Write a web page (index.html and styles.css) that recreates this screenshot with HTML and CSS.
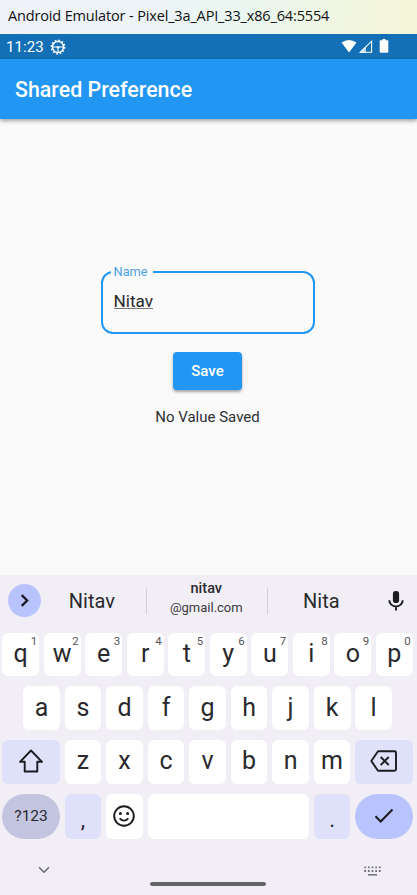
FILE: index.html
```html
<!DOCTYPE html>
<html lang="en">
<head>
<meta charset="utf-8">
<title>Shared Preference</title>
<link rel="stylesheet" href="styles.css">
</head>
<body>
<header class="window-bar"><span class="window-title">Android Emulator - Pixel_3a_API_33_x86_64:5554</span></header>
<div class="status-bar">
  <span class="clock">11:23</span>
  <svg class="gear" viewBox="0 0 16 16" width="16" height="16" fill="none" stroke="#fff"><circle cx="8" cy="8" r="5.500" stroke-width="1.400"/><circle cx="8" cy="8" r="6.700" stroke-width="1.400" stroke-dasharray="1.750 1.758"/><path d="M3 8h10M8 8v5" stroke-width="1.100"/><path d="M6 7.500h4L8 10z" fill="#fff" stroke="none"/></svg>
  <svg class="signals" viewBox="0 0 48 15" width="48" height="15"><path d="M.5 3.400Q8-1.600 15.500 3.400L8 13.600z" fill="#fff"/><path d="M30.600 2.200V13.300H19.300z" fill="none" stroke="#fff" stroke-width="1.100"/><path d="M18.500 13.800L25 7.500V13.800z" fill="#fff" opacity=".7"/><path d="M39.500 1.200h2V0h3v1.200h2q.8 0 .8.800v11q0 .8-.8.800h-7q-.8 0-.8-.8V2q0-.8.800-.8z" fill="#fff"/></svg>
</div>
<div class="app-bar"><h1>Shared Preference</h1></div>
<main class="content">
  <fieldset class="field"><legend>Name</legend><span class="value">Nitav</span></fieldset>
  <button class="save">Save</button>
  <p class="message">No Value Saved</p>
</main>
<section class="keyboard">
  <div class="suggestions">
    <span class="expand"><svg width="33" height="33" viewBox="0 0 32 32" fill="none" stroke="#1b1b20" stroke-width="2.200"><path d="M13.300 10.800L18.600 16l-5.300 5.200"/></svg></span>
    <span class="word first">Nitav</span>
    <span class="word mail"><b>nitav</b><small>@gmail.com</small></span>
    <span class="word last">Nita</span>
    <svg class="mic" width="18" height="22" viewBox="0 0 18 22"><rect x="5.900" y="1" width="6.200" height="12" rx="2.800" fill="#1b1b20"/><path d="M2.300 10.200a6.700 6.300 0 0 0 13.400 0M9 16.500V20.500" fill="none" stroke="#1b1b20" stroke-width="1.900"/></svg>
  </div>
  <div class="row">
    <span class="key">q<sup>1</sup></span><span class="key">w<sup>2</sup></span><span class="key">e<sup>3</sup></span><span class="key">r<sup>4</sup></span><span class="key">t<sup>5</sup></span><span class="key">y<sup>6</sup></span><span class="key">u<sup>7</sup></span><span class="key">i<sup>8</sup></span><span class="key">o<sup>9</sup></span><span class="key">p<sup>0</sup></span>
  </div>
  <div class="row inset">
    <span class="key">a</span><span class="key">s</span><span class="key">d</span><span class="key">f</span><span class="key">g</span><span class="key">h</span><span class="key">j</span><span class="key">k</span><span class="key">l</span>
  </div>
  <div class="row">
    <span class="key wide tint"><svg width="26" height="26" viewBox="0 0 26 26" fill="none" stroke="#1b1b20" stroke-width="1.900" stroke-linejoin="round"><path d="M13 2.500L24 13.800H19.300V23.500H6.700V13.800H2z"/></svg></span>
    <span class="key">z</span><span class="key">x</span><span class="key">c</span><span class="key">v</span><span class="key">b</span><span class="key">n</span><span class="key">m</span>
    <span class="key wide tint"><svg width="28" height="24" viewBox="0 0 28 24" fill="none" stroke="#1b1b20" stroke-width="1.900" stroke-linejoin="round"><path d="M8 2.300H24.500Q26 2.300 26 3.800V20.200Q26 21.700 24.500 21.700H8L1.300 12z"/><path d="M10.700 8l8 8M18.700 8l-8 8"/></svg></span>
  </div>
  <div class="row bottom">
    <span class="key wide symbols">?123</span>
    <span class="key tint punct">,</span>
    <span class="key emoji"><svg width="24" height="24" viewBox="0 0 24 24" fill="none" stroke="#1b1b20" stroke-width="1.900"><circle cx="12" cy="12" r="9.800"/><path d="M7.600 14.300Q12 19 16.400 14.300"/><circle cx="8.400" cy="9.500" r="1.500" fill="#1b1b20" stroke="none"/><circle cx="15.600" cy="9.500" r="1.500" fill="#1b1b20" stroke="none"/></svg></span>
    <span class="key space"></span>
    <span class="key tint punct">.</span>
    <span class="key wide enter"><svg width="20" height="16" viewBox="0 0 20 16" fill="none" stroke="#1b1b20" stroke-width="2"><path d="M1.500 8.300L6.700 13.500L18.500 1.500"/></svg></span>
  </div>
  <div class="nav">
    <svg class="hide" width="12" height="8" viewBox="0 0 12 8" fill="none" stroke="#69686d" stroke-width="1.500"><path d="M1 1.200l5 5 5-5"/></svg>
    <span class="handle"></span>
    <svg class="switch" width="17" height="10" viewBox="0 0 17 10" fill="none" stroke="#77767b"><path d="M.3 1.400H17M.3 5H17" stroke-width="1.800" stroke-dasharray="1.800 1.850"/><path d="M4 8.800h9" stroke-width="1.600"/></svg>
  </div>
</section>
</body>
</html>
```
FILE: styles.css
```css
* { box-sizing: border-box; }
body { margin: 0; width: 417px; height: 895px; overflow: hidden; display: flex; flex-direction: column; background: #fafafa; font-family: Roboto, "Liberation Sans", sans-serif; color: #1b1b20; }
svg { display: block; flex: none; }
.window-bar { height: 34px; padding-left: 8px; background: linear-gradient(100deg, #f0f2fa 0%, #edf3f9 30%, #eaf6f0 57%, #f3f6dc 90%, #f4f6d9); color: #111; }
.window-title { display: block; font: 14.5px/32px "Open Sans", sans-serif; letter-spacing: -.15px; white-space: nowrap; }
.status-bar { height: 25px; padding: 0 28px 0 6px; display: flex; align-items: center; background: #136fb6; color: #fff; }
.clock { font-size: 15px; letter-spacing: .1px; }
.gear { margin-left: 6px; }
.signals { margin-left: auto; }
.app-bar { height: 60px; flex: none; padding-left: 15px; display: flex; align-items: center; background: #2196f3; box-shadow: 0 2px 4px rgba(0,0,0,.35); }
h1 { margin: 2px 0 0; color: #fff; font-size: 21.4px; line-height: 26px; font-weight: 500; }
.content { height: 456px; flex: none; padding-top: 145px; display: flex; flex-direction: column; align-items: center; }
.field { width: 214px; height: 70px; margin: 0 0 0 -2px; padding: 0 11px; border: 2px solid #2196f3; border-radius: 12px; }
.field legend { margin-left: -3px; padding: 0 5px 0 3px; color: #4a9fe9; font-size: 12.800px; line-height: 15px; }
.value { display: block; width: max-content; height: 18px; margin-top: 12px; font-size: 17.200px; line-height: 20px; color: #28282a; border-bottom: 1px solid #777; }
.save { width: 69px; height: 38px; margin: 18px 0 0 -2px; padding: 0; border: 0; border-radius: 4px; background: #2196f3; box-shadow: 0 2px 3px rgba(0,0,0,.35); color: #fff; font: 500 15px Roboto, sans-serif; }
.message { margin: 18px 0 0 -2px; font-size: 15px; line-height: 18px; color: #303033; }
.keyboard { height: 320px; flex: none; background: #f1eff5; padding: 0 4px 0 2.300px; }
.suggestions { height: 57.500px; display: flex; align-items: center; padding: 0 8px 6px 6px; }
.expand { width: 33px; height: 33px; border-radius: 50%; background: #b9c4ff; }
.word { height: 26px; display: flex; align-items: center; justify-content: center; font-size: 20px; color: #2a2a2e; }
.first { width: 105px; padding-right: 4px; }
.mail { width: 122px; flex-direction: column; border: solid #d2d0d7; border-width: 0 1px; font-size: 15px; line-height: 18px; padding: 0 2px 5px 0; }
.mail b { font-weight: 500; font-size: 14.500px; }
.mail small { font-size: 13px; line-height: 19px; color: #3c3b40; }
.last { width: 106px; }
.mic { margin-left: auto; }
.row { display: flex; gap: 4.720px; height: 43.400px; margin-bottom: 10.500px; }
.inset { padding-left: 20.800px; }
.key { position: relative; flex: none; width: 36.800px; display: flex; align-items: center; justify-content: center; border-radius: 6px; background: #fff; font-size: 25px; line-height: 30px; color: #2a2a2e; padding-bottom: 1px; }
.key sup { position: absolute; top: 1px; right: 2px; font-size: 11.500px; line-height: 14px; color: #55545a; }
.wide { width: 57.560px; }
.tint { background: #dfe0fa; }
.bottom { height: 45px; }
.symbols { border-radius: 23px; background: #c3c4df; font-size: 15.500px; }
.punct { padding-top: 7px; font-size: 22px; }
.space { width: 161.360px; }
.enter { border-radius: 23px; background: #b9c4ff; }
.nav { display: flex; align-items: center; padding: 6px 34px 0; }
.hide { margin: -1px 0 0 2px; }
.handle { width: 116px; height: 4px; margin: 26px 0 0 100px; border-radius: 2px; background: #656468; }
.switch { margin: 0 -2px 0 auto; }
```
